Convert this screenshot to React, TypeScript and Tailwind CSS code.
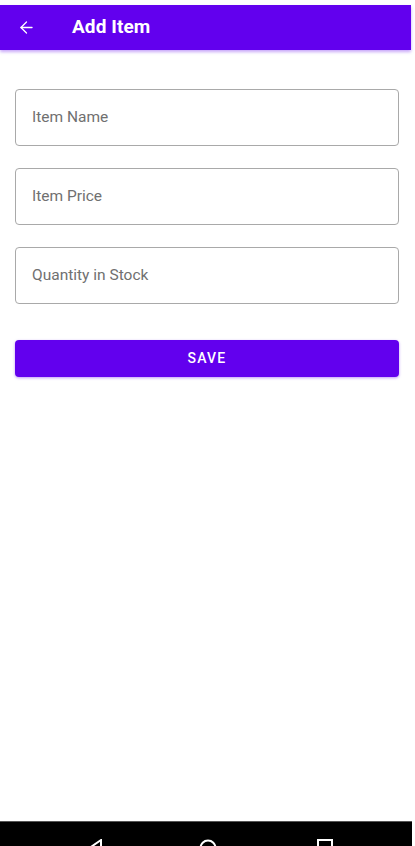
import React from "react";
import { ArrowLeft } from "lucide-react";

const fields = ["Item Name", "Item Price", "Quantity in Stock"];

export default function App() {
  return (
    <div
      className="w-[415px] h-[846px] bg-white flex flex-col overflow-hidden"
      style={{ fontFamily: "Roboto, 'Liberation Sans', sans-serif" }}
    >
      {/* App bar */}
      <div className="mt-[5px] w-[411px] h-[45px] bg-[#6200ee] flex items-center shadow-[0_2px_3px_rgba(98,0,238,0.35)]">
        <ArrowLeft className="ml-[17px] w-[19px] h-[19px] text-white" strokeWidth={1.6} />
        <span className="ml-[36px] text-white font-bold text-[19px] tracking-[0.1px]">
          Add Item
        </span>
      </div>

      {/* Form */}
      <div className="flex flex-col px-[15px] pt-[39px] w-[414px] gap-[22px]">
        {fields.map((f) => (
          <div
            key={f}
            className="h-[57px] border border-[#a9a9a9] rounded-[4px] flex items-center pl-[16px] text-[15.5px] text-[#707070]"
          >
            {f}
          </div>
        ))}
        <button className="mt-[14px] h-[37px] rounded-[4px] bg-[#6200ee] text-white text-[14px] font-medium tracking-[1.2px] shadow-[0_1px_3px_rgba(98,0,238,0.4)]">
          SAVE
        </button>
      </div>

      <div className="flex-1" />

      {/* System nav bar */}
      <div className="w-[412px] h-[25px] bg-black border-t border-[#555] flex items-start justify-center overflow-hidden">
        <div className="relative w-full h-full">
          <svg className="absolute left-[86px] top-[17px]" width="18" height="20" viewBox="0 0 18 20">
            <path d="M15 1 L2 10 L15 19 Z" fill="none" stroke="#fff" strokeWidth="2" />
          </svg>
          <svg className="absolute left-[199px] top-[17px]" width="18" height="18" viewBox="0 0 18 18">
            <circle cx="9" cy="9" r="7.5" fill="none" stroke="#fff" strokeWidth="2" />
          </svg>
          <svg className="absolute left-[317px] top-[17px]" width="16" height="16" viewBox="0 0 16 16">
            <rect x="1" y="1" width="14" height="14" fill="none" stroke="#fff" strokeWidth="2" />
          </svg>
        </div>
      </div>
    </div>
  );
}
